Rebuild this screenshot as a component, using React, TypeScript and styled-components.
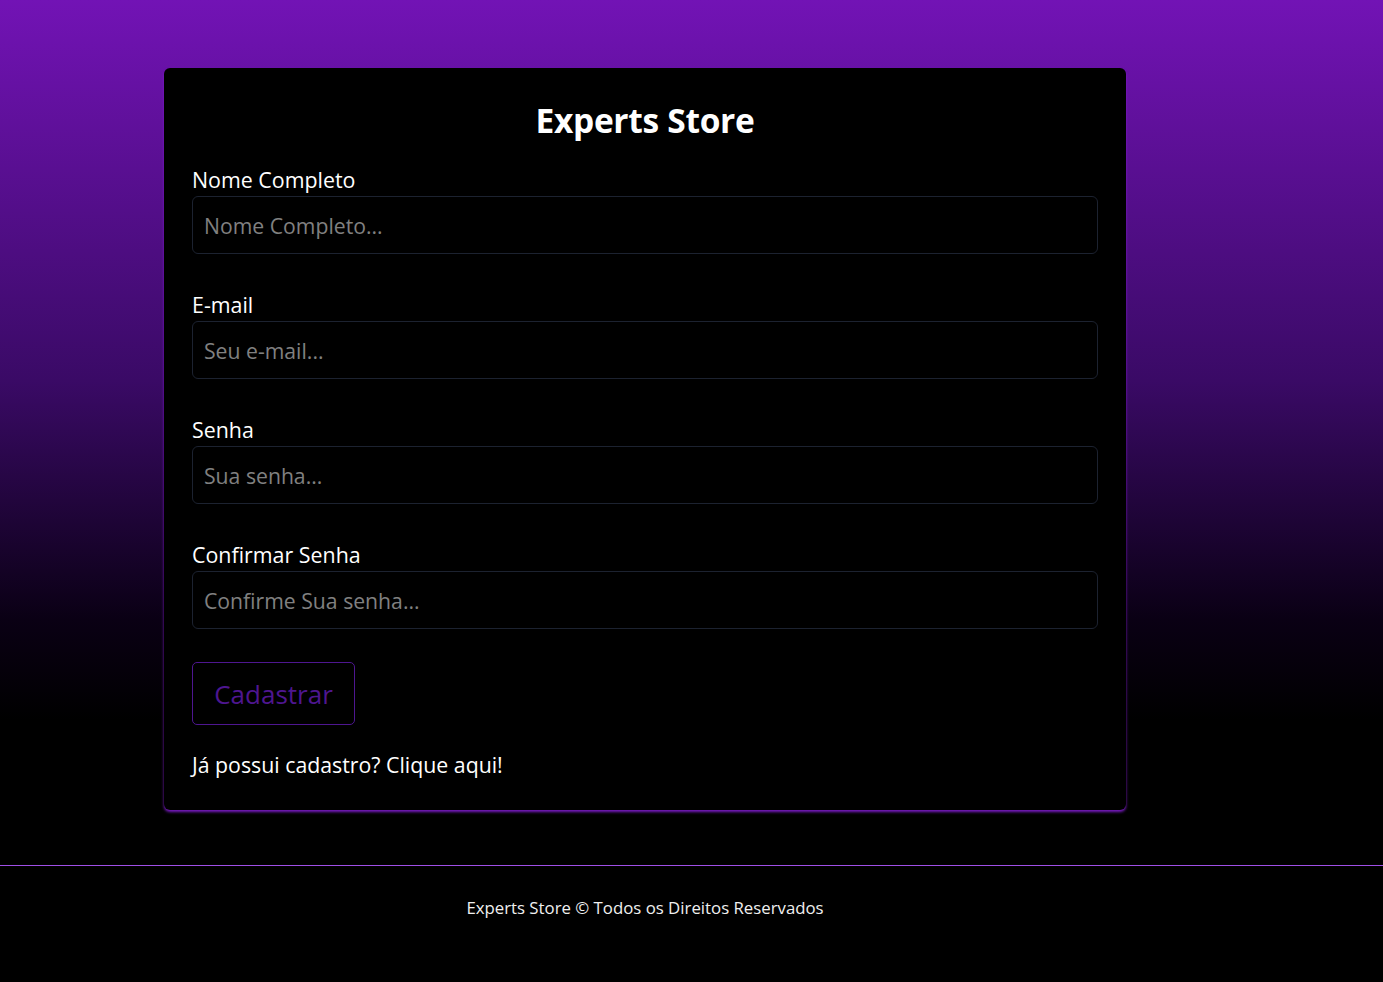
import React from "react";
import styled, { createGlobalStyle } from "styled-components";

const GlobalStyle = createGlobalStyle`
  * { box-sizing: border-box; }
  html, body { margin: 0; padding: 0; background: #000; }
  body {
    font-family: "Open Sans", "Noto Sans", sans-serif;
    color: #fff;
  }
`;

const Page = styled.div`
  min-height: 982px;
  display: flex;
  flex-direction: column;
  background: #000;
`;

const Main = styled.main`
  background: linear-gradient(180deg, #7213b5 0px, #3a0a66 380px, #0a0014 620px, #000 720px);
  height: 865px;
`;

const Container = styled.div`
  width: 1290px;
  padding-top: 68px;
  display: flex;
  justify-content: center;
`;

const Card = styled.form`
  width: 962px;
  height: 742px;
  background: #000;
  border-radius: 6px;
  padding: 27px 28px 0;
  box-shadow: 0 2px 3px rgba(128, 28, 205, 0.95);
  display: flex;
  flex-direction: column;
`;

const Title = styled.h1`
  margin: 0 0 21px;
  text-align: center;
  font-size: 33.5px;
  line-height: 50px;
  font-weight: 700;
  letter-spacing: -0.3px;
`;

const Field = styled.div`
  display: flex;
  flex-direction: column;
  margin-bottom: 37px;
`;

const Label = styled.label`
  font-size: 21.4px;
  line-height: 28px;
  margin-bottom: 2px;
  color: #fff;
`;

const Input = styled.input`
  height: 58px;
  width: 100%;
  background: #000;
  border: 1px solid #1c2230;
  border-radius: 6px;
  padding: 0 11px;
  font-family: inherit;
  font-size: 21.2px;
  color: #fff;
  outline: none;
  &::placeholder {
    color: #808080;
  }
`;

const Button = styled.button`
  align-self: flex-start;
  margin-top: -4px;
  width: 163px;
  height: 63px;
  background: transparent;
  border: 1px solid #4e1690;
  border-radius: 5px;
  color: #4e1690;
  font-family: inherit;
  font-size: 26px;
`;

const LoginText = styled.p`
  margin: 25px 0 0;
  font-size: 21.3px;
  line-height: 30px;
  color: #fff;
`;

const Footer = styled.footer`
  border-top: 1px solid #9f4fe6;
  height: 117px;
  background: #000;
`;

const FooterInner = styled.div`
  width: 1290px;
  text-align: center;
  padding-top: 29px;
  font-size: 16.8px;
  line-height: 26px;
  color: #f0f0f0;
`;

const fields = [
  { label: "Nome Completo", placeholder: "Nome Completo...", type: "text" },
  { label: "E-mail", placeholder: "Seu e-mail...", type: "email" },
  { label: "Senha", placeholder: "Sua senha...", type: "password" },
  { label: "Confirmar Senha", placeholder: "Confirme Sua senha...", type: "password" },
];

export default function App() {
  return (
    <Page>
      <GlobalStyle />
      <Main>
        <Container>
          <Card onSubmit={(e) => e.preventDefault()}>
            <Title>Experts Store</Title>
            {fields.map((f) => (
              <Field key={f.label}>
                <Label>{f.label}</Label>
                <Input type={f.type} placeholder={f.placeholder} />
              </Field>
            ))}
            <Button type="submit">Cadastrar</Button>
            <LoginText>Já possui cadastro? Clique aqui!</LoginText>
          </Card>
        </Container>
      </Main>
      <Footer>
        <FooterInner>Experts Store © Todos os Direitos Reservados</FooterInner>
      </Footer>
    </Page>
  );
}
